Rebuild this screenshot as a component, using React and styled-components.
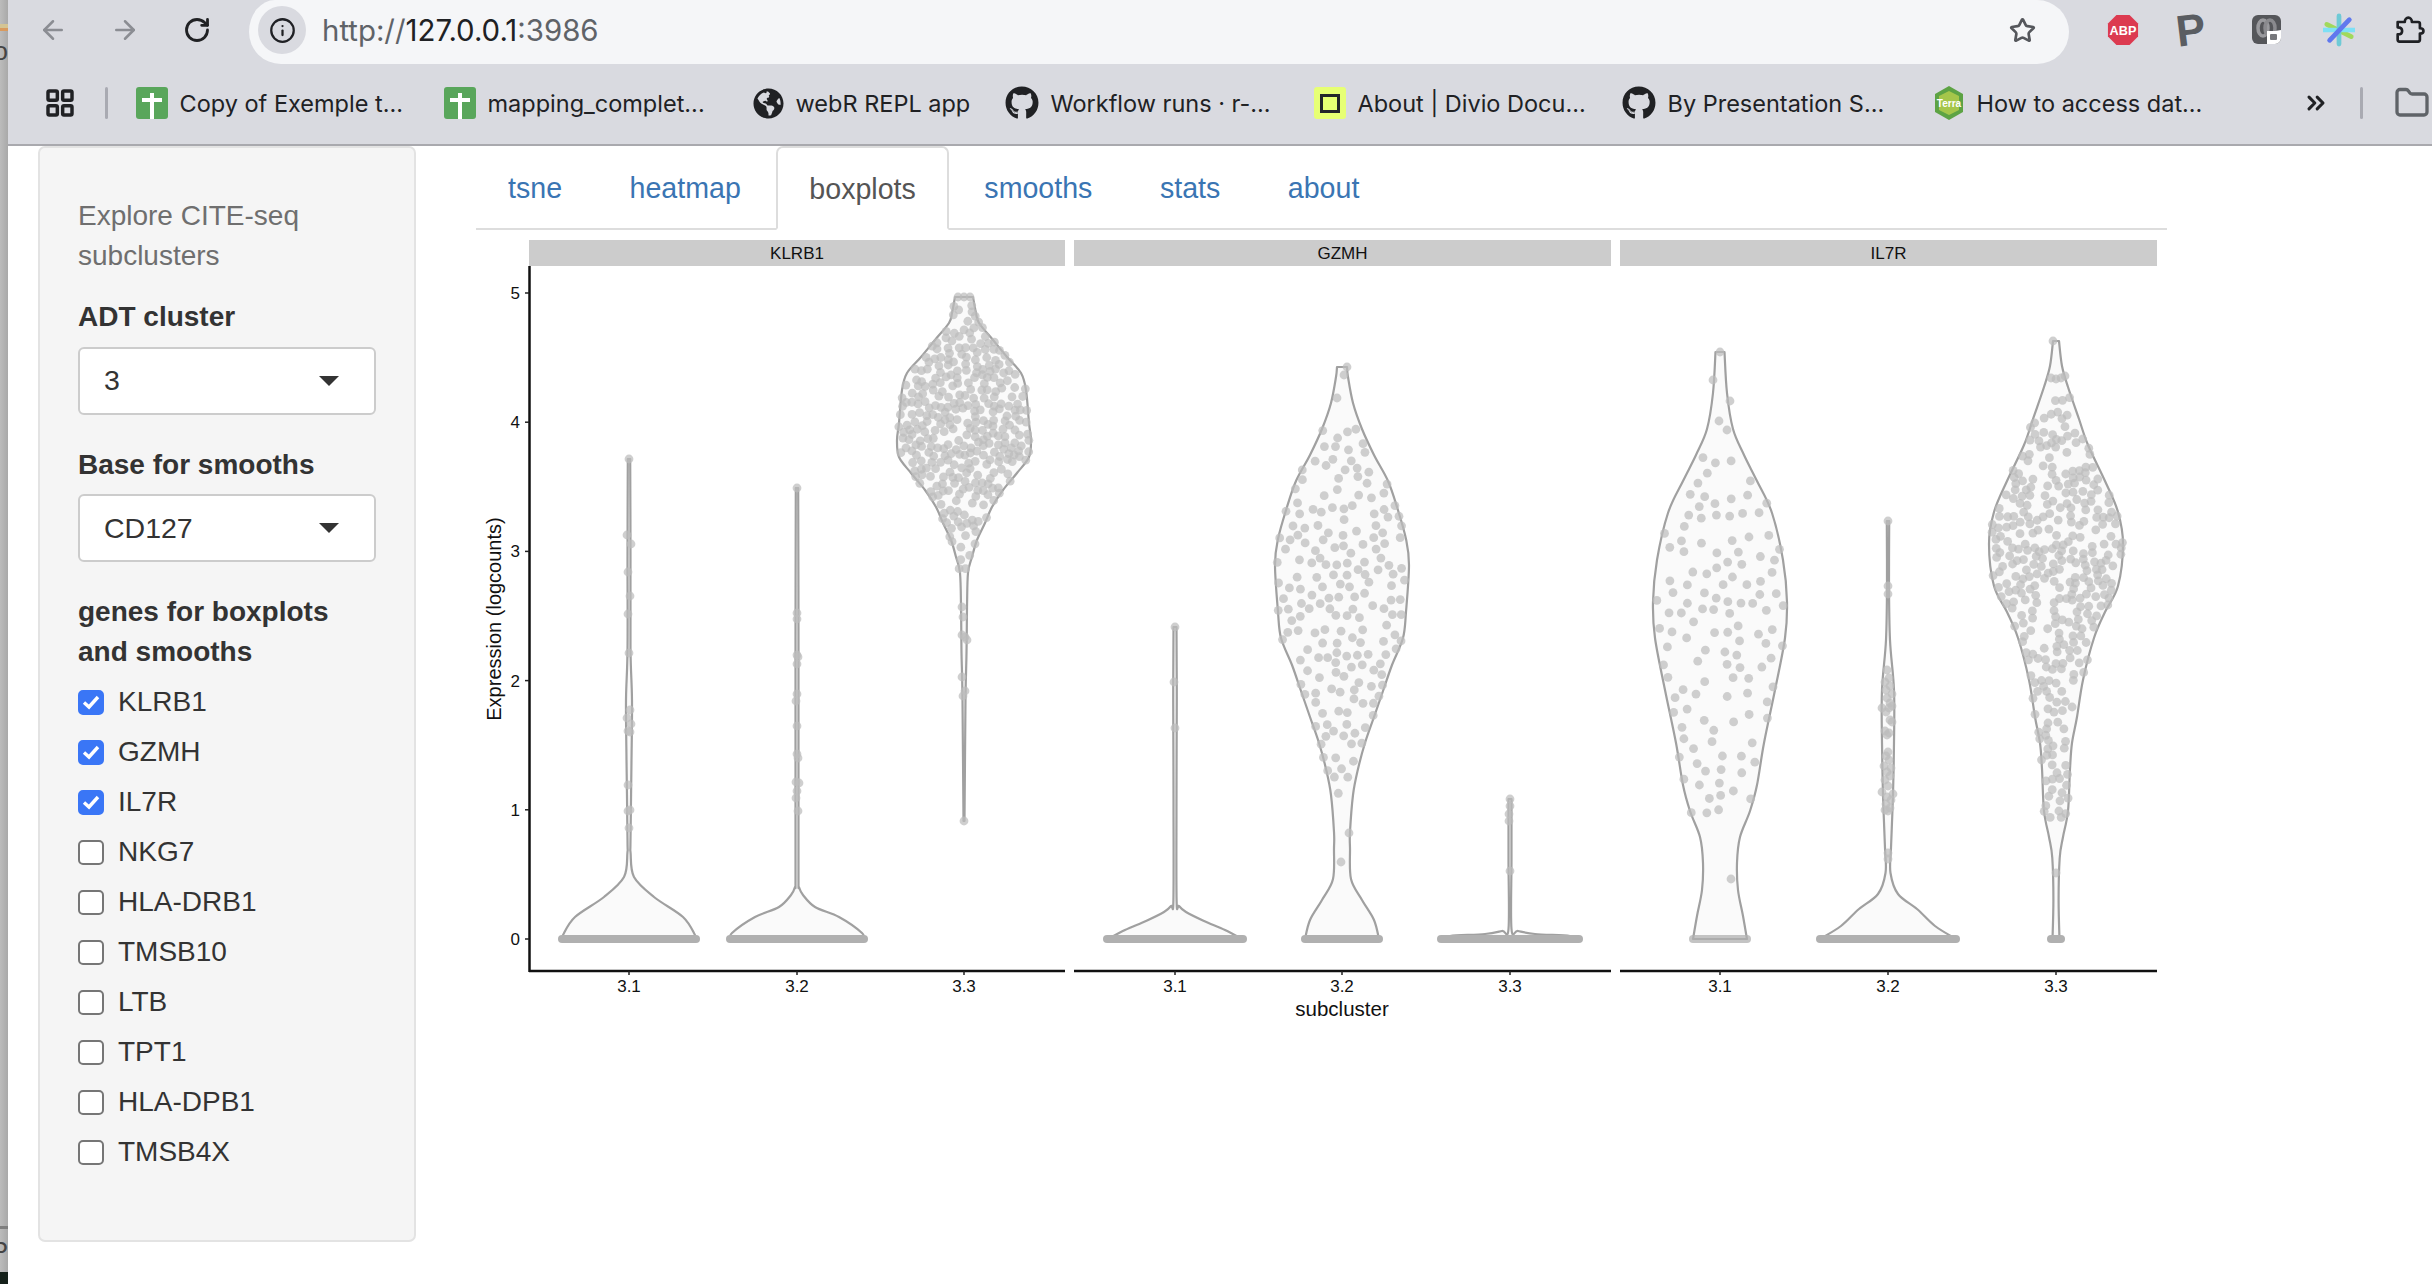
import React from "react";
import styled, { createGlobalStyle } from "styled-components";
import {
  ArrowLeft,
  ArrowRight,
  RotateCw,
  Info,
  Star,
  Folder,
  ChevronsRight,
  LayoutGrid,
} from "lucide-react";
import { FaGithub, FaGlobeAmericas } from "react-icons/fa";

const GlobalStyle = createGlobalStyle`
  html, body {
    margin: 0;
    padding: 0;
    background: #fff;
    overflow: hidden;
  }
  * { box-sizing: border-box; }
`;

const UI_FONT = `Inter, "Liberation Sans", sans-serif`;
const PAGE_FONT = `"Liberation Sans", Arial, sans-serif`;

/* ---------- plot data ---------- */

const Y0 = 939;
const UNIT = 129.2;

// violin outlines as [pixel y, half width], top to bottom
const violins = [
  {
    cx: 629,
    band: 67,
    outline: [[459, 1.2], [560, 1.5], [650, 1.5], [700, 3], [760, 2.5], [840, 1.5], [853, 1.6], [877, 5], [897, 25], [917, 54], [935, 66], [939, 67]],
    extra: [[0, 459], [-2, 535], [2, 544], [-1, 572], [1, 596], [-1, 614], [0, 653], [1, 710], [-2, 718], [2, 724], [-1, 731], [1, 732], [-1, 785], [-1, 811], [1, 810], [0, 828]],
  },
  {
    cx: 797,
    band: 67,
    outline: [[488, 1.2], [640, 1.5], [800, 1.5], [880, 1.5], [887, 2], [895, 6], [907, 18], [917, 42], [933, 65], [939, 66]],
    extra: [[0, 488], [0, 613], [0, 619], [0, 655], [1, 657], [0, 664], [0, 694], [-1, 701], [0, 726], [0, 754], [1, 758], [-1, 782], [2, 783], [0, 791], [-1, 798], [1, 811]],
  },
  {
    cx: 964,
    outline: [[297, 9], [313, 12], [323, 15], [340, 29], [357, 43], [373, 57], [390, 62], [423, 65], [440, 67], [457, 65], [473, 53], [490, 39], [507, 28], [523, 21], [540, 13], [557, 8], [573, 4], [607, 3], [653, 2.5], [700, 1.5], [821, 0.5]],
    dots: { n: 320, seed: 11, from: 305, to: 573, gap: 5.2 },
    extra: [[-6, 297], [0, 297], [6, 297], [-2, 607], [-1, 617], [1, 637], [-2, 635], [3, 640], [-2, 677], [1, 691], [-1, 696], [0, 821]],
  },
  {
    cx: 1175,
    band: 68,
    outline: [[627, 1.5], [700, 1.8], [800, 1.5], [900, 1.6], [906, 4], [912, 11], [921, 29], [930, 50], [939, 67]],
    extra: [[0, 627], [-1, 682], [0, 728]],
  },
  {
    cx: 1342,
    band: 37,
    outline: [[367, 5], [377, 6], [403, 11], [429, 20], [455, 32], [481, 46], [507, 55], [539, 64], [565, 67], [612, 64], [638, 61], [665, 50], [691, 41], [717, 32], [743, 23], [769, 16], [795, 11], [832, 8], [848, 8], [879, 9], [900, 20], [920, 32], [939, 37]],
    dots: { n: 190, seed: 23, from: 425, to: 811, gap: 8.5 },
    extra: [[5, 367], [2, 375], [-5, 398], [7, 833], [-1, 862]],
  },
  {
    cx: 1510,
    band: 69,
    outline: [[799, 1.5], [860, 1.5], [929, 1.5], [931, 8], [934, 25], [936, 60], [939, 69]],
    extra: [[0, 799], [0, 806], [-1, 814], [-1, 821], [0, 871]],
  },
  {
    cx: 1720,
    band: 27,
    faint: true,
    outline: [[352, 4.5], [393, 7], [429, 13], [455, 24], [481, 37], [513, 52], [560, 63], [602, 67], [638, 65], [690, 55], [743, 44], [785, 37], [811, 30], [837, 20], [863, 17], [890, 18], [916, 23], [939, 27]],
    dots: { n: 125, seed: 37, from: 455, to: 816, gap: 11 },
    extra: [[0, 352], [-7, 380], [10, 401], [-1, 421], [7, 430], [11, 879]],
  },
  {
    cx: 1888,
    band: 68,
    outline: [[521, 1.2], [586, 1], [640, 2], [690, 6], [743, 6], [795, 5], [848, 3], [873, 2.5], [894, 10], [909, 29], [926, 47], [939, 68]],
    extra: [[0, 521], [0, 586], [0, 594], [0, 853], [0, 859],
      [-1, 670], [1, 678], [-3, 682], [2, 686], [-2, 690], [4, 694], [-1, 698], [2, 703], [-6, 708], [4, 706], [-2, 712], [1, 708], [4, 722], [-3, 731], [1, 733], [-1, 735], [2, 720],
      [0, 752], [-2, 756], [1, 760], [-4, 766], [3, 768], [-1, 772], [2, 776], [-3, 780], [-6, 792], [5, 794], [0, 786], [-1, 797], [3, 800], [-2, 804], [2, 808], [0, 811], [-3, 810]],
  },
  {
    cx: 2056,
    band: 5,
    outline: [[341, 3], [366, 6], [387, 12], [419, 23], [445, 32], [481, 49], [512, 62], [544, 67], [586, 62], [612, 49], [638, 38], [680, 27], [717, 21], [743, 16], [769, 14], [811, 12], [837, 7], [858, 3.7], [900, 2.6], [939, 3.5]],
    dots: { n: 330, seed: 51, from: 395, to: 821, gap: 5.4 },
    extra: [[-3, 341], [-5, 378], [0, 379], [5, 378], [9, 376], [0, 873]],
  },
];

const strips = [
  { name: "KLRB1", x: 529, w: 536, ticks: [629, 797, 964] },
  { name: "GZMH", x: 1074, w: 537, ticks: [1175, 1342, 1510] },
  { name: "IL7R", x: 1620, w: 537, ticks: [1720, 1888, 2056] },
];

function mulberry(seed) {
  let a = seed;
  return () => {
    a |= 0;
    a = (a + 0x6d2b79f5) | 0;
    let t = Math.imul(a ^ (a >>> 15), 1 | a);
    t = (t + Math.imul(t ^ (t >>> 7), 61 | t)) ^ t;
    return ((t ^ (t >>> 14)) >>> 0) / 4294967296;
  };
}

function widthAt(outline, y) {
  for (let i = 1; i < outline.length; i++) {
    const [y1, w1] = outline[i];
    const [y0, w0] = outline[i - 1];
    if (y <= y1) return w0 + ((w1 - w0) * (y - y0)) / (y1 - y0);
  }
  return outline[outline.length - 1][1];
}

function scatter(v) {
  const { n, seed, from, to, gap } = v.dots;
  const rnd = mulberry(seed);
  const maxW = Math.max(...v.outline.map((p) => p[1]));
  const out = [];
  for (let tries = 0; tries < n * 200 && out.length < n; tries++) {
    const y = from + rnd() * (to - from);
    const w = widthAt(v.outline, y);
    if (rnd() > Math.pow(w / maxW, 1.4) + 0.04) continue;
    const x = v.cx + (rnd() * 2 - 1) * w;
    if (out.some((p) => (p[0] - x) ** 2 + (p[1] - y) ** 2 < gap * gap)) continue;
    out.push([x, y]);
  }
  return out;
}

// smooth closed shape through both sides of the outline
function violinPath(v) {
  const right = v.outline.map(([y, w]) => [v.cx + w, y]);
  const left = v.outline.map(([y, w]) => [v.cx - w, y]).reverse();
  const side = (pts) => {
    let d = "";
    for (let i = 0; i < pts.length - 1; i++) {
      const p0 = pts[Math.max(i - 1, 0)];
      const p1 = pts[i];
      const p2 = pts[i + 1];
      const p3 = pts[Math.min(i + 2, pts.length - 1)];
      const c1 = [p1[0] + (p2[0] - p0[0]) / 6, p1[1] + (p2[1] - p0[1]) / 6];
      const c2 = [p2[0] - (p3[0] - p1[0]) / 6, p2[1] - (p3[1] - p1[1]) / 6];
      d += `C${c1[0].toFixed(1)} ${c1[1].toFixed(1)} ${c2[0].toFixed(1)} ${c2[1].toFixed(1)} ${p2[0].toFixed(1)} ${p2[1].toFixed(1)}`;
    }
    return d;
  };
  return `M${right[0][0]} ${right[0][1]}${side(right)}L${left[0][0]} ${left[0][1]}${side(left)}Z`;
}

/* ---------- browser chrome ---------- */

const Screen = styled.div`
  display: flex;
  width: 2432px;
  height: 1284px;
  overflow: hidden;
`;

const DesktopSliver = styled.div`
  position: relative;
  flex: 0 0 8px;
  overflow: hidden;
  background: linear-gradient(90deg, #bcbcbc, #a9a9a9);
`;

const SliverBand = styled.div`
  position: absolute;
  left: 0;
  right: 0;
  top: ${(p) => p.$top}px;
  height: ${(p) => p.$height}px;
  background: ${(p) => p.$color};
`;

const SliverLetter = styled.span`
  position: absolute;
  right: 0;
  top: ${(p) => p.$top}px;
  font: 26px ${PAGE_FONT};
  color: #444;
`;

const BrowserWindow = styled.div`
  flex: 1;
  display: flex;
  flex-direction: column;
  min-width: 0;
`;

const Toolbar = styled.div`
  display: flex;
  align-items: center;
  height: 64px;
  padding-left: 30px;
  background: #d9dae0;
`;

const NavButton = styled.div`
  display: flex;
  justify-content: center;
  width: 30px;
  margin-right: ${(p) => p.$gap}px;
  margin-bottom: 4px;
  color: ${(p) => p.$color};
`;

const Omnibox = styled.div`
  display: flex;
  align-items: center;
  width: 1820px;
  height: 64px;
  padding: 0 33px 4px 9px;
  border-radius: 26px 32px 32px 32px / 32px;
  background: #f5f6f8;
`;

const InfoPill = styled.div`
  display: flex;
  align-items: center;
  justify-content: center;
  width: 48px;
  height: 48px;
  border-radius: 50%;
  background: #d9dae0;
  color: #1f2024;
`;

const Url = styled.div`
  flex: 1;
  margin-left: 16px;
  font: 29.4px ${UI_FONT};
  color: #5f6368;
`;

const UrlHost = styled.span`
  color: #202124;
`;

const Extensions = styled.div`
  display: flex;
  align-items: center;
  height: 64px;
  padding-left: 38px;
  padding-bottom: 4px;
`;

const Extension = styled.div`
  display: flex;
  align-items: center;
  justify-content: center;
  width: 32px;
  margin-right: ${(p) => p.$gap}px;
`;

const PocketLetter = styled.span`
  display: block;
  font: 700 44px ${PAGE_FONT};
  line-height: 44px;
  color: #5a5d62;
  transform: rotate(-7deg);
`;

const BookmarksBar = styled.div`
  display: flex;
  align-items: center;
  height: 82px;
  padding-bottom: 2px;
  padding-left: 36px;
  background: #d9dae0;
  border-bottom: 2px solid #a9a9ae;
  overflow: hidden;
`;

const AppsIcon = styled.div`
  display: flex;
  width: 32px;
  color: #202124;
`;

const BarDivider = styled.div`
  flex: none;
  width: 3px;
  height: 32px;
  margin: ${(p) => p.$margin};
  border-radius: 2px;
  background: #a9aab2;
`;

const Bookmark = styled.div`
  flex: none;
  display: flex;
  align-items: center;
  gap: 12px;
  width: ${(p) => p.$width}px;
  font: 23.5px ${UI_FONT};
  color: #202124;
  white-space: nowrap;
`;

const SheetIcon = styled.div`
  position: relative;
  width: 32px;
  height: 32px;
  border-radius: 3px;
  background: #59a65b;

  &::before,
  &::after {
    content: "";
    position: absolute;
    background: #fff;
  }
  &::before { left: 14px; top: 6px; width: 4px; height: 26px; }
  &::after { left: 6px; top: 11px; width: 20px; height: 4px; }
`;

const DivioIcon = styled.div`
  display: flex;
  align-items: center;
  justify-content: center;
  width: 32px;
  height: 32px;
  border-radius: 3px;
  background: #e7ff74;

  &::after {
    content: "";
    width: 14px;
    height: 13px;
    border: 3px solid #23242a;
  }
`;

const Overflow = styled.div`
  display: flex;
  margin-left: 86px;
  color: #202124;
`;

const BarFolder = styled.div`
  display: flex;
  margin-left: 31px;
  color: #5f6368;
`;

/* ---------- shiny page ---------- */

const Page = styled.div`
  flex: 1;
  display: flex;
  align-items: flex-start;
  padding-left: 30px;
  background: #fff;
  font-family: ${PAGE_FONT};
  color: #333;
`;

const Sidebar = styled.aside`
  flex: none;
  width: 378px;
  height: 1096px;
  padding: 48px 38px 0;
  background: #f5f5f5;
  border: 2px solid #e3e3e3;
  border-radius: 7px;
`;

const Title = styled.div`
  font-size: 28px;
  line-height: 40px;
  color: #6f6f6f;
`;

const FieldLabel = styled.div`
  margin-top: ${(p) => p.$top}px;
  margin-bottom: 10px;
  font-size: 28px;
  font-weight: 700;
  line-height: 39.5px;
  color: #333;
`;

const SelectBox = styled.div`
  display: flex;
  align-items: center;
  justify-content: space-between;
  height: 68px;
  padding: 0 35px 0 24px;
  background: #fff;
  border: 2px solid #ccc;
  border-radius: 6px;
  font-size: 28.5px;
  color: #333;

  &::after {
    content: "";
    border-left: 10px solid transparent;
    border-right: 10px solid transparent;
    border-top: 10px solid #333;
  }
`;

const CheckList = styled.div`
  margin-top: -4px;
`;

const CheckRow = styled.label`
  display: flex;
  align-items: center;
  gap: 14px;
  height: 50px;
  font-size: 28px;
  color: #333;
`;

const CheckBox = styled.span`
  display: flex;
  align-items: center;
  justify-content: center;
  width: 26px;
  height: 25px;
  border-radius: 5px;
  background: ${(p) => (p.$checked ? "#3a76f6" : "#fff")};
  border: 2px solid ${(p) => (p.$checked ? "#3a76f6" : "#767676")};
`;

const Main = styled.main`
  flex: none;
  margin-left: 60px;
  width: 1700px;
`;

const Tabs = styled.nav`
  display: flex;
  width: 1691px;
  height: 84px;
  border-bottom: 2px solid #ddd;
`;

const Tab = styled.div`
  display: flex;
  align-items: center;
  height: ${(p) => (p.$active ? "84px" : "82px")};
  margin-right: 3.5px;
  padding: 2px ${(p) => (p.$active ? "31px" : "32px")} 0;
  font-size: 28.6px;
  color: ${(p) => (p.$active ? "#555" : "#3a75b3")};
  background: #fff;
  border: ${(p) => (p.$active ? "2px solid #ddd" : "none")};
  border-bottom: ${(p) => (p.$active ? "2px solid #fff" : "none")};
  border-radius: 7px 7px 0 0;
`;

const PlotSvg = styled.svg`
  display: block;
  margin-top: 4px;
`;

/* ---------- pieces ---------- */

function TerraIcon() {
  return (
    <svg width="32" height="34" viewBox="0 0 32 34">
      <path d="M16 0 30 8v18L16 34 2 26V8z" fill="#5da344" />
      <path d="M16 5 26 10v14l-10 5-10-5V10z" fill="#a5c64a" />
      <text x="16" y="21" textAnchor="middle" fontSize="10" fontWeight="700" fill="#fff" fontFamily={PAGE_FONT}>
        Terra
      </text>
    </svg>
  );
}

function AbpIcon() {
  return (
    <svg width="34" height="34" viewBox="0 0 34 34">
      <path d="M10 1h14l9 9v14l-9 9H10l-9-9V10z" fill="#dc3a50" />
      <text x="17" y="22.5" textAnchor="middle" fontSize="13.5" fontWeight="700" fill="#fff" fontFamily={PAGE_FONT}>
        ABP
      </text>
    </svg>
  );
}

function LoomIcon() {
  return (
    <svg width="30" height="30" viewBox="0 0 30 30">
      <rect width="29" height="29" rx="6" fill="#55565a" />
      <ellipse cx="11" cy="13" rx="5" ry="8" fill="none" stroke="#9a9a9e" strokeWidth="3.5" />
      <ellipse cx="18" cy="13" rx="5" ry="8" fill="none" stroke="#8a8a8e" strokeWidth="3.5" />
      <path d="M15 16h8l6-1v8a6 6 0 0 1-6 6h-8z" fill="#fff" />
      <rect x="18" y="19" width="7" height="6" rx="1" fill="#77787c" />
    </svg>
  );
}

function PinwheelIcon() {
  return (
    <svg width="34" height="34" viewBox="0 0 34 34">
      <path d="M4 11 30 24" stroke="#a1d95b" strokeWidth="5" strokeLinecap="round" />
      <path d="M1 17h32" stroke="#7ee0f5" strokeWidth="5" strokeLinecap="round" />
      <path d="M17 2v30" stroke="#6ecad6" strokeWidth="5" strokeLinecap="round" />
      <path d="M7 28 28 6" stroke="#6079ee" strokeWidth="5" strokeLinecap="round" />
    </svg>
  );
}

function PuzzleIcon() {
  return (
    <svg width="34" height="32" viewBox="0 0 36 34">
      <path
        d="M3 8h8c0-3 2-5 4-5s4 2 4 5h7a2 2 0 0 1 2 2v5c3 0 4 1.5 4 3s-1 3-4 3v7a2 2 0 0 1-2 2H5a2 2 0 0 1-2-2v-6c3 0 5-1.5 5-4s-2-4-5-4z"
        fill="none"
        stroke="#1f2024"
        strokeWidth="3"
        strokeLinejoin="round"
      />
    </svg>
  );
}

function Violin({ v }) {
  const generated = v.dots ? scatter(v) : [];
  const fixed = (v.extra || []).map(([dx, y]) => [v.cx + dx, y]);
  return (
    <g>
      <path d={violinPath(v)} fill="#fafafa" stroke="#a0a0a0" strokeWidth="2.2" strokeLinejoin="round" />
      {[...generated, ...fixed].map(([x, y], i) => (
        <circle key={i} cx={x} cy={y} r="4.4" fill="#bcbcbc" opacity="0.72" />
      ))}
      {v.band && (
        <rect
          x={v.cx - v.band - 4}
          y={Y0 - 4}
          width={(v.band + 4) * 2}
          height="8"
          rx="4"
          fill="#b0b0b0"
          opacity={v.faint ? 0.75 : 1}
        />
      )}
    </g>
  );
}

function Plot() {
  const labelFont = { fontFamily: PAGE_FONT, fill: "#111" };
  return (
    <PlotSvg width="1700" height="800" viewBox="476 234 1700 800">
      {strips.map((s) => (
        <g key={s.name}>
          <rect x={s.x} y="240" width={s.w} height="26" fill="#cccccc" />
          <text x={s.x + s.w / 2} y="259" textAnchor="middle" fontSize="17" {...labelFont}>
            {s.name}
          </text>
          <path d={`M${s.x} 971h${s.w}`} stroke="#111" strokeWidth="2.5" />
          {s.ticks.map((t) => (
            <g key={t}>
              <path d={`M${t} 971v4`} stroke="#222" strokeWidth="1.5" />
              <text x={t} y="992" textAnchor="middle" fontSize="17" {...labelFont}>
                3.{s.ticks.indexOf(t) + 1}
              </text>
            </g>
          ))}
        </g>
      ))}
      <path d="M529.5 266V972" stroke="#111" strokeWidth="2.5" />
      {[0, 1, 2, 3, 4, 5].map((n) => (
        <g key={n}>
          <path d={`M525 ${Y0 - n * UNIT}h4`} stroke="#222" strokeWidth="1.5" />
          <text x="520" y={Y0 - n * UNIT + 6} textAnchor="end" fontSize="17" {...labelFont}>
            {n}
          </text>
        </g>
      ))}
      <text
        transform="translate(501 619) rotate(-90)"
        textAnchor="middle"
        fontSize="20"
        {...labelFont}
      >
        Expression (logcounts)
      </text>
      <text x="1342" y="1016" textAnchor="middle" fontSize="20.5" {...labelFont}>
        subcluster
      </text>
      {violins.map((v) => (
        <Violin key={v.cx} v={v} />
      ))}
    </PlotSvg>
  );
}

const bookmarks = [
  { label: "Copy of Exemple t...", width: 308, icon: <SheetIcon /> },
  { label: "mapping_complet...", width: 309, icon: <SheetIcon /> },
  { label: "webR REPL app", width: 252, icon: <FaGlobeAmericas size={31} /> },
  { label: "Workflow runs · r-...", width: 309, icon: <FaGithub size={34} /> },
  { label: "About | Divio Docu...", width: 308, icon: <DivioIcon /> },
  { label: "By Presentation S...", width: 311, icon: <FaGithub size={34} /> },
  { label: "How to access dat...", width: 283, icon: <TerraIcon /> },
];

const tabs = ["tsne", "heatmap", "boxplots", "smooths", "stats", "about"];

const genes = ["KLRB1", "GZMH", "IL7R", "NKG7", "HLA-DRB1", "TMSB10", "LTB", "TPT1", "HLA-DPB1", "TMSB4X"];

export default function App() {
  return (
    <Screen>
      <GlobalStyle />
      <DesktopSliver>
        <SliverBand $top={24} $height={5} $color="#d4c493" />
        <SliverBand $top={28} $height={3} $color="#d99a5e" />
        <SliverBand $top={1226} $height={3} $color="#7f7f7f" />
        <SliverBand $top={1272} $height={12} $color="#15211a" />
        <SliverLetter $top={36}>o</SliverLetter>
        <SliverLetter $top={1236}>P</SliverLetter>
      </DesktopSliver>
      <BrowserWindow>
        <Toolbar>
          <NavButton $gap={42} $color="#8b8d93">
            <ArrowLeft size={32} strokeWidth={2} />
          </NavButton>
          <NavButton $gap={42} $color="#8b8d93">
            <ArrowRight size={32} strokeWidth={2} />
          </NavButton>
          <NavButton $gap={37} $color="#202124">
            <RotateCw size={28} strokeWidth={2.4} />
          </NavButton>
          <Omnibox>
            <InfoPill>
              <Info size={27} strokeWidth={2} />
            </InfoPill>
            <Url>
              http://<UrlHost>127.0.0.1</UrlHost>:3986
            </Url>
            <Star size={27} strokeWidth={2.4} color="#55575c" />
          </Omnibox>
          <Extensions>
            <Extension $gap={36}>
              <AbpIcon />
            </Extension>
            <Extension $gap={44}>
              <PocketLetter>P</PocketLetter>
            </Extension>
            <Extension $gap={40}>
              <LoomIcon />
            </Extension>
            <Extension $gap={40}>
              <PinwheelIcon />
            </Extension>
            <Extension $gap={0}>
              <PuzzleIcon />
            </Extension>
          </Extensions>
        </Toolbar>
        <BookmarksBar>
          <AppsIcon>
            <LayoutGrid size={32} strokeWidth={2.6} />
          </AppsIcon>
          <BarDivider $margin="0 27.5px 0 29px" />
          {bookmarks.map((b) => (
            <Bookmark key={b.label} $width={b.width}>
              {b.icon}
              <span>{b.label}</span>
            </Bookmark>
          ))}
          <Overflow>
            <ChevronsRight size={28} strokeWidth={2.6} />
          </Overflow>
          <BarDivider $margin="0 0 0 30px" />
          <BarFolder>
            <Folder size={36} strokeWidth={2.2} />
          </BarFolder>
        </BookmarksBar>
        <Page>
          <Sidebar>
            <Title>
              Explore CITE-seq
              <br />
              subclusters
            </Title>
            <FieldLabel $top={21}>ADT cluster</FieldLabel>
            <SelectBox>3</SelectBox>
            <FieldLabel $top={30}>Base for smooths</FieldLabel>
            <SelectBox>CD127</SelectBox>
            <FieldLabel $top={30}>
              genes for boxplots
              <br />
              and smooths
            </FieldLabel>
            <CheckList>
              {genes.map((g, i) => (
                <CheckRow key={g}>
                  <CheckBox $checked={i < 3}>
                    {i < 3 && (
                      <svg width="18" height="16" viewBox="0 0 18 16">
                        <path d="M2 8.5 7 13 16 3" fill="none" stroke="#fff" strokeWidth="3.4" />
                      </svg>
                    )}
                  </CheckBox>
                  {g}
                </CheckRow>
              ))}
            </CheckList>
          </Sidebar>
          <Main>
            <Tabs>
              {tabs.map((t) => (
                <Tab key={t} $active={t === "boxplots"}>
                  {t}
                </Tab>
              ))}
            </Tabs>
            <Plot />
          </Main>
        </Page>
      </BrowserWindow>
    </Screen>
  );
}
